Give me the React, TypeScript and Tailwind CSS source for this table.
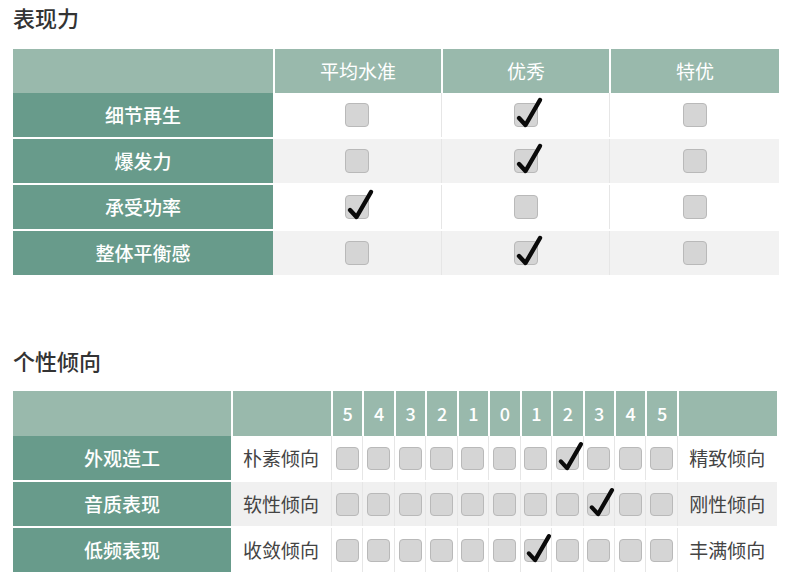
import React from 'react'

const font = { fontFamily: '"Noto Sans CJK SC", "Noto Sans", sans-serif' }

function Box({ checked, size = 24 }: { checked?: boolean; size?: number }) {
  return (
    <div
      className="relative rounded-[4px] border border-[#b9b9b9] bg-[#d5d5d5]"
      style={{ width: size, height: size }}
    >
      {checked && (
        <svg
          className="absolute left-0 top-0 overflow-visible"
          width={size}
          height={size}
          viewBox="0 0 24 24"
        >
          <path
            d="M4 14 L10.5 21 L25 -4"
            fill="none"
            stroke="#0a0a0a"
            strokeWidth="4.4"
            strokeLinecap="round"
            strokeLinejoin="round"
          />
        </svg>
      )}
    </div>
  )
}

const perfCols = ['平均水准', '优秀', '特优']
const perfRows: [string, number][] = [
  ['细节再生', 1],
  ['爆发力', 1],
  ['承受功率', 0],
  ['整体平衡感', 1],
]

const scale = ['5', '4', '3', '2', '1', '0', '1', '2', '3', '4', '5']
const traits: [string, string, string, number][] = [
  ['外观造工', '朴素倾向', '精致倾向', 7],
  ['音质表现', '软性倾向', '刚性倾向', 8],
  ['低频表现', '收敛倾向', '丰满倾向', 6],
]

export default function App() {
  return (
    <div className="w-[790px] h-[574px] overflow-hidden bg-white pl-[13px] pr-[11px]" style={font}>
      <h2 className="h-[49px] text-[22px] font-medium leading-[34px] text-[#333]">表现力</h2>

      {/* 表现力 table */}
      <div className="flex flex-col">
        <div className="grid h-[44px] grid-cols-[260px_168px_168px_170px] bg-[#99b9ac] text-[19px] text-white">
          <div />
          {perfCols.map((c) => (
            <div key={c} className="flex items-center justify-center border-l-2 border-white">
              {c}
            </div>
          ))}
        </div>
        <div className="flex flex-col gap-[2px]">
          {perfRows.map(([label, pick], i) => (
            <div
              key={label}
              className={`grid h-[44px] grid-cols-[260px_168px_168px_170px] ${i % 2 ? 'bg-[#f2f2f2]' : 'bg-white'}`}
            >
              <div className="flex items-center justify-center bg-[#689b8b] text-[19px] font-medium text-white">
                {label}
              </div>
              {perfCols.map((c, j) => (
                <div key={c} className={`flex items-center justify-center ${j > 0 ? 'border-l border-[#e6e6e6]' : ''}`}>
                  <Box checked={j === pick} />
                </div>
              ))}
            </div>
          ))}
        </div>
      </div>

      <h2 className="mt-[68px] h-[48px] text-[22px] font-medium leading-[34px] text-[#333]">个性倾向</h2>

      {/* 个性倾向 table */}
      <div className="flex w-[764px] flex-col">
        <div className="grid h-[45px] grid-cols-[218px_100px_repeat(11,31.45px)_100px] bg-[#99b9ac] text-[18px] font-medium text-white">
          <div />
          <div className="border-l-2 border-white" />
          {scale.map((n, i) => (
            <div key={i} className="flex items-center justify-center border-l-2 border-white">
              {n}
            </div>
          ))}
          <div className="border-l-2 border-white" />
        </div>
        <div className="flex flex-col gap-[2px]">
          {traits.map(([label, left, right, pick], i) => (
            <div
              key={label}
              className={`grid h-[44px] grid-cols-[218px_100px_repeat(11,31.45px)_100px] ${i % 2 ? 'bg-[#f0f0f0]' : 'bg-white'}`}
            >
              <div className="flex items-center justify-center bg-[#689b8b] text-[19px] font-medium text-white">
                {label}
              </div>
              <div className="flex items-center justify-center text-[19px] text-[#444]">{left}</div>
              {scale.map((_, j) => (
                <div key={j} className="flex items-center justify-center border-l border-[#e6e6e6]">
                  <Box checked={j === pick} size={23} />
                </div>
              ))}
              <div className="flex items-center justify-center border-l border-[#e6e6e6] text-[19px] text-[#444]">
                {right}
              </div>
            </div>
          ))}
        </div>
      </div>
    </div>
  )
}
